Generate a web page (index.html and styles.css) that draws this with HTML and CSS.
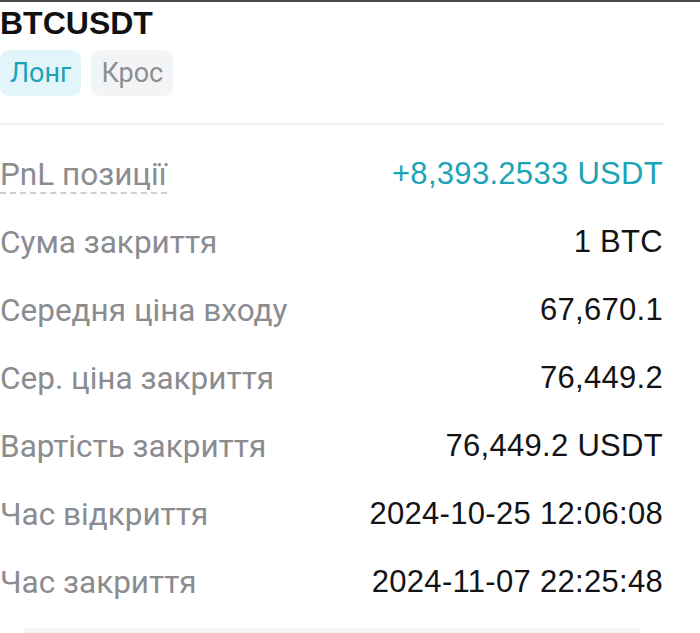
FILE: index.html
```html
<!DOCTYPE html>
<html lang="uk">
<head>
<meta charset="utf-8">
<link rel="stylesheet" href="styles.css">
</head>
<body>
<div class="topline"></div>
<main class="card">
  <h1 class="title">BTCUSDT</h1>
  <div class="tags">
    <span class="tag tag-long">Лонг</span>
    <span class="tag tag-cross">Крос</span>
  </div>
  <div class="divider"></div>
  <div class="rows">
    <div class="row"><span class="label dotted">PnL позиції</span><span class="value pos">+8,393.2533 USDT</span></div>
    <div class="row"><span class="label">Сума закриття</span><span class="value">1 BTC</span></div>
    <div class="row"><span class="label">Середня ціна входу</span><span class="value">67,670.1</span></div>
    <div class="row"><span class="label">Сер. ціна закриття</span><span class="value">76,449.2</span></div>
    <div class="row"><span class="label">Вартість закриття</span><span class="value">76,449.2 USDT</span></div>
    <div class="row"><span class="label">Час відкриття</span><span class="value">2024-10-25 12:06:08</span></div>
    <div class="row"><span class="label">Час закриття</span><span class="value">2024-11-07 22:25:48</span></div>
  </div>
  <div class="bottom-box"></div>
</main>
</body>
</html>
```
FILE: styles.css
```css
html, body {
  margin: 0;
  padding: 0;
  background: #ffffff;
  overflow: hidden;
}
.topline {
  height: 2px;
  background: #4a4a4a;
}
.card {
  width: 663px;
  font-family: Roboto, "Noto Sans", sans-serif;
}
.title {
  margin: 0;
  padding-top: 2px;
  font-family: "Liberation Sans", Arial, sans-serif;
  font-weight: 700;
  font-size: 32px;
  line-height: 38px;
  color: #111111;
}
.tags {
  display: flex;
  gap: 10px;
  margin-top: 8px;
}
.tag {
  display: flex;
  align-items: center;
  height: 46px;
  padding: 0 10px;
  border-radius: 9px;
  font-size: 27px;
}
.tag-long {
  background: #e1f5fa;
  color: #1ba3b7;
}
.tag-cross {
  background: #f3f4f6;
  color: #8d8e92;
}
.divider {
  margin-top: 27px;
  height: 2px;
  background: #efefef;
}
.rows {
  display: flex;
  flex-direction: column;
  padding-top: 15px;
}
.row {
  display: flex;
  justify-content: space-between;
  align-items: center;
  height: 68px;
}
.label {
  font-size: 31.5px;
  color: #8b8c90;
}
.dotted {
  border-bottom: 2px dashed #cfcfcf;
  line-height: 32px;
  padding-bottom: 1px;
  margin-top: 4px;
}
.value {
  font-family: "Liberation Sans", Arial, sans-serif;
  font-size: 31px;
  letter-spacing: 0.3px;
  color: #131316;
}
.value.pos {
  color: #1ba3b8;
}
.bottom-box {
  margin-top: 12px;
  margin-left: 22px;
  width: 620px;
  height: 5px;
  border-radius: 16px 16px 0 0;
  background: #f4f5f7;
}
```
